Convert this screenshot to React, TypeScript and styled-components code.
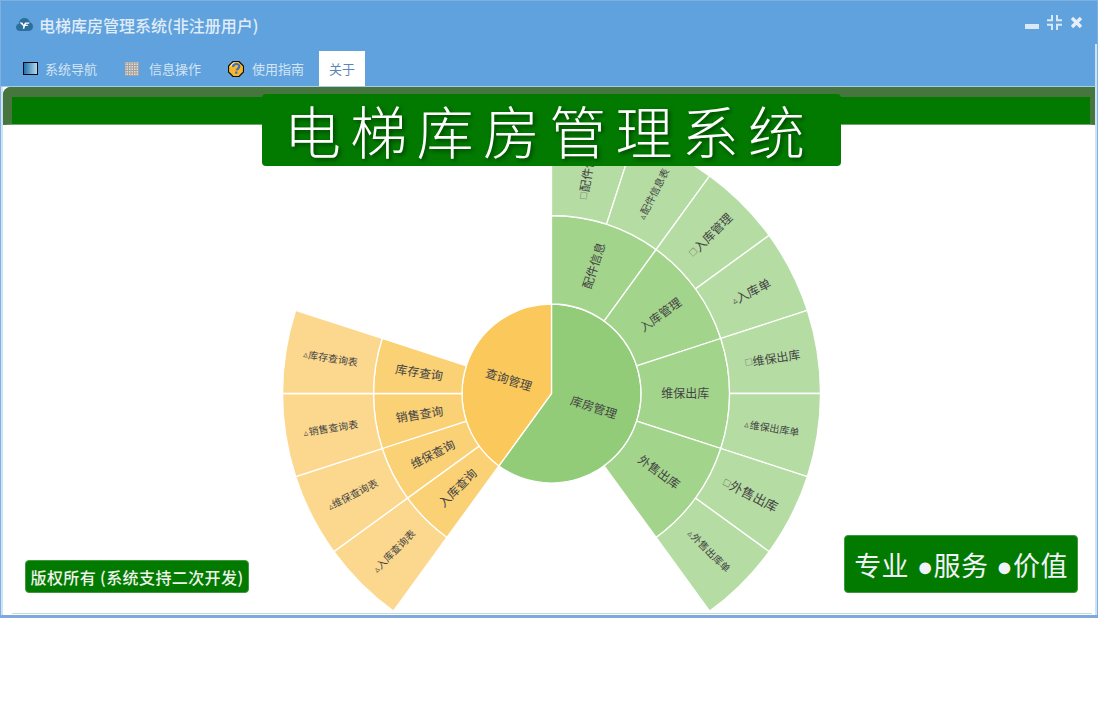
import React from "react";
import styled, { createGlobalStyle } from "styled-components";

const CJK = `"Noto Sans CJK SC", "Liberation Sans", sans-serif`;

const Global = createGlobalStyle`
  html, body { margin: 0; padding: 0; background: #fff; }
  body { font-family: ${CJK}; width: 1098px; height: 728px; overflow: hidden; }
`;

const Win = styled.div`
  width: 1098px;
  height: 618px;
  box-sizing: border-box;
  background: #5fa2dd;
  border: 1px solid #7fb0e0;
  border-bottom: 3px solid #7fa8dc;
  display: flex;
  flex-direction: column;
`;
const TitleBar = styled.div`
  height: 43px;
  flex: none;
  display: flex;
  align-items: center;
  padding: 4px 14px 0 15px;
  box-sizing: border-box;
`;
const Title = styled.div`
  margin-left: 6px;
  font-size: 16px;
  line-height: 20px;
  font-weight: 500;
  color: #e0ecf8;
  white-space: nowrap;
`;
const WinButtons = styled.div`
  margin-left: auto;
  display: flex;
  align-items: center;
  gap: 8px;
  margin-top: -4px;
`;
const TabRow = styled.div`
  height: 43px;
  flex: none;
  display: flex;
  align-items: flex-end;
  padding-left: 16px;
  border-bottom: 1px solid #a9cbe9;
  border-right: 2px solid #cfe3f5;
  box-sizing: border-box;
`;
const Tab = styled.div<{ $after: number; $gap: number }>`
  height: 35px;
  display: flex;
  align-items: center;
  gap: ${(p) => p.$gap}px;
  padding: 0 6px;
  margin-right: ${(p) => p.$after}px;
  font-size: 13px;
  color: #d4e4f4;
`;
const ActiveTab = styled.div`
  height: 35px;
  display: flex;
  align-items: center;
  padding: 0 10px;
  font-size: 13px;
  color: #5b86b8;
  background: #fff;
`;
const Content = styled.div`
  flex: 1;
  min-height: 0;
  background: #fff;
  position: relative;
  overflow: hidden;
  border-left: 2px solid #cfe3f5;
  border-right: 2px solid #cfe3f5;
  display: flex;
  flex-direction: column;
`;
const Band = styled.div`
  flex: none;
  height: 27px;
  background: #027a00;
  border-style: solid;
  border-color: #46763e;
  border-width: 10px 5px 1px 9px;
  border-bottom-color: #6fa86e;
  border-top-left-radius: 8px;
`;
const Chart = styled.svg`
  flex: none;
  display: block;
`;
const BottomRule = styled.div`
  flex: none;
  margin: auto 3px 1px 9px;
  height: 1px;
  background: #c5dcd0;
`;
const Banner = styled.div`
  position: absolute;
  left: 259px;
  top: 7px;
  width: 579px;
  height: 72px;
  box-sizing: border-box;
  background: #027a00;
  border-radius: 4px;
  color: #fff;
  font-size: 57px;
  font-weight: 300;
  letter-spacing: 9.3px;
  line-height: 70px;
  padding-left: 22px;
  white-space: nowrap;
  text-shadow: 2px 2px 4px rgba(0, 0, 0, 0.5);
`;
const Copyright = styled.div`
  position: absolute;
  left: 22px;
  top: 473px;
  width: 224px;
  height: 33px;
  box-sizing: border-box;
  background: #027a00;
  border: 1px solid #3f9a3f;
  border-radius: 4px;
  color: #eef3ec;
  font-size: 16px;
  font-weight: 500;
  letter-spacing: 0.4px;
  line-height: 33px;
  text-align: center;
  white-space: nowrap;
`;
const Slogan = styled.div`
  position: absolute;
  left: 841px;
  top: 448px;
  width: 234px;
  height: 58px;
  box-sizing: border-box;
  background: #027a00;
  border: 1px solid #3f9a3f;
  border-radius: 4px;
  color: #f1f3f8;
  font-family: "Liberation Sans", "Noto Sans CJK SC", sans-serif;
  font-size: 27px;
  letter-spacing: 0.4px;
  line-height: 62px;
  text-align: center;
  white-space: nowrap;
`;

const CX = 548.5;
const CY = 306.5;
const R = [0, 89.5, 178, 269];
const pt = (r: number, a: number) => {
  const t = (a * Math.PI) / 180;
  return [CX + r * Math.sin(t), CY - r * Math.cos(t)];
};
const arc = (r0: number, r1: number, a0: number, a1: number) => {
  const [x0, y0] = pt(r1, a0);
  const [x1, y1] = pt(r1, a1);
  const large = a1 - a0 > 180 ? 1 : 0;
  if (r0 === 0) return `M${CX} ${CY}L${x0} ${y0}A${r1} ${r1} 0 ${large} 1 ${x1} ${y1}Z`;
  const [x2, y2] = pt(r0, a1);
  const [x3, y3] = pt(r0, a0);
  return `M${x0} ${y0}A${r1} ${r1} 0 ${large} 1 ${x1} ${y1}L${x2} ${y2}A${r0} ${r0} 0 ${large} 0 ${x3} ${y3}Z`;
};

type Seg = { ring: number; a0: number; a1: number; fill: string; mark?: string; label: string; size: number };
const G = ["#93cc79", "#a3d48c", "#b5dca3"];
const O = ["#fbc85c", "#fbd176", "#fcd88e"];
const segs: Seg[] = [
  { ring: 0, a0: 0, a1: 216, fill: G[0], label: "库房管理", size: 12 },
  { ring: 0, a0: 216, a1: 360, fill: O[0], label: "查询管理", size: 12 },
  { ring: 1, a0: 0, a1: 36, fill: G[1], label: "配件信息", size: 12 },
  { ring: 1, a0: 36, a1: 72, fill: G[1], label: "入库管理", size: 12 },
  { ring: 1, a0: 72, a1: 108, fill: G[1], label: "维保出库", size: 12 },
  { ring: 1, a0: 108, a1: 144, fill: G[1], label: "外售出库", size: 12 },
  { ring: 1, a0: 216, a1: 234, fill: O[1], label: "入库查询", size: 12 },
  { ring: 1, a0: 234, a1: 252, fill: O[1], label: "维保查询", size: 12 },
  { ring: 1, a0: 252, a1: 270, fill: O[1], label: "销售查询", size: 12 },
  { ring: 1, a0: 270, a1: 288, fill: O[1], label: "库存查询", size: 12 },
  { ring: 2, a0: 0, a1: 18, fill: G[2], mark: "□", label: "配件信息", size: 12 },
  { ring: 2, a0: 18, a1: 36, fill: G[2], mark: "▵", label: "配件信息表", size: 10 },
  { ring: 2, a0: 36, a1: 54, fill: G[2], mark: "□", label: "入库管理", size: 12 },
  { ring: 2, a0: 54, a1: 72, fill: G[2], mark: "▵", label: "入库单", size: 12.5 },
  { ring: 2, a0: 72, a1: 90, fill: G[2], mark: "□", label: "维保出库", size: 12 },
  { ring: 2, a0: 90, a1: 108, fill: G[2], mark: "▵", label: "维保出库单", size: 10 },
  { ring: 2, a0: 108, a1: 126, fill: G[2], mark: "□", label: "外售出库", size: 13 },
  { ring: 2, a0: 126, a1: 144, fill: G[2], mark: "▵", label: "外售出库单", size: 10 },
  { ring: 2, a0: 216, a1: 234, fill: O[2], mark: "▵", label: "入库查询表", size: 10 },
  { ring: 2, a0: 234, a1: 252, fill: O[2], mark: "▵", label: "维保查询表", size: 10 },
  { ring: 2, a0: 252, a1: 270, fill: O[2], mark: "▵", label: "销售查询表", size: 10 },
  { ring: 2, a0: 270, a1: 288, fill: O[2], mark: "▵", label: "库存查询表", size: 10 },
];

const SegLabel = styled.text`
  font-family: ${CJK};
  fill: #444;
  text-anchor: middle;
  dominant-baseline: central;
`;
const Mark = styled.tspan<{ $square: boolean }>`
  fill: #4a4a4a;
  font-size: ${(p) => (p.$square ? 8 : 9)}px;
`;

const Sunburst = () => (
  <Chart width={1092} height={486} viewBox="0 38 1092 486">
    {segs.map((s) => (
      <path
        key={s.label + s.ring}
        d={arc(R[s.ring], R[s.ring + 1], s.a0, s.a1)}
        fill={s.fill}
        stroke="#fff"
        strokeWidth={1.3}
      />
    ))}
    {segs.map((s) => {
      const mid = (s.a0 + s.a1) / 2;
      const r = s.ring === 0 ? 44.75 : (R[s.ring] + R[s.ring + 1]) / 2;
      const [x, y0] = pt(r, mid);
      const y = y0 - 1;
      const rot = mid < 180 ? mid - 90 : mid - 270;
      return (
        <SegLabel key={"t" + s.label + s.ring} x={x} y={y} fontSize={s.size} transform={`rotate(${rot} ${x} ${y})`}>
          {s.mark && <Mark $square={s.mark === "□"}>{s.mark}</Mark>}
          {s.label}
        </SegLabel>
      );
    })}
  </Chart>
);

const LogoIcon = () => (
  <svg width="17" height="15" viewBox="0 0 17 15">
    <path d="M4 14C1.500 14 0 12.200 0 10.200 0 8.200 1.300 7 2.800 6.700 3 3 5.800 1 8.500 1c2.800 0 4.800 1.800 5.400 4.200C15.700 5.600 17 7.400 17 9.600 17 12.300 15.200 14 12.800 14z" fill="#2b6f9f" />
    <path d="M3.500 5.500h2.800l1.300 2.300 1.500-2.300h4.400l-.5 1.300h-2.700l-.6 1h2.400l-.5 1.200h-2.500l-.8 2.700H6.900l.4-2.500z" fill="#fff" />
  </svg>
);
const NavIcon = () => (
  <svg width="15" height="13" viewBox="0 0 15 13">
    <defs>
      <linearGradient id="nav" x1="0" x2="1" y1="0" y2="0">
        <stop offset="0" stopColor="#1d6fa8" />
        <stop offset="1" stopColor="#bcdcf0" />
      </linearGradient>
    </defs>
    <rect x="0.500" y="0.500" width="14" height="12" fill="url(#nav)" stroke="#050a18" />
  </svg>
);
const GridIcon = () => (
  <svg width="14" height="14" viewBox="0 0 14 14">
    <rect width="14" height="14" fill="#dfdddb" />
    {[0.5, 3, 5.5, 8, 10.5, 13].map((v) => (
      <React.Fragment key={v}>
        <rect x={v} y="0" width="1" height="14" fill="#a3a09e" />
        <rect x="0" y={v} width="14" height="1" fill="#a3a09e" />
      </React.Fragment>
    ))}
  </svg>
);
const HelpIcon = () => (
  <svg width="16" height="16" viewBox="0 0 16 16">
    <path d="M5 .5h6L15.500 5v6L11 15.500H5L.5 11V5z" fill="#f6b62e" stroke="#14100a" strokeWidth="1.200" />
    <path d="M2.500 5.500C3.500 3 5 2 7 2" fill="none" stroke="#fff2c0" strokeWidth="1.200" />
    <path d="M5 6C5.200 4 6.700 3 8.300 3c1.800 0 3 1.100 3 2.500 0 2-2.400 2-2.500 3.900" fill="none" stroke="#3d6fc4" strokeWidth="2.200" />
    <rect x="7.200" y="10.500" width="2.200" height="2.200" fill="#3d6fc4" />
  </svg>
);
const MinIcon = () => (
  <svg width="14" height="15" viewBox="0 0 14 15">
    <rect x="0" y="9" width="14" height="5" fill="#dbe9f7" />
  </svg>
);
const RestoreIcon = () => (
  <svg width="15" height="15" viewBox="0 0 15 15" fill="#dbe9f7">
    <path d="M4 0h2v6.300H0v-2h4zM9 0h2v4.300h4v2H9zM0 8.700h6V15H4v-4.300H0zM9 8.700h6v2h-4V15H9z" />
  </svg>
);
const CloseIcon = () => (
  <svg width="13" height="13" viewBox="0 0 13 13">
    <path d="M2 2l9 9M11 2l-9 9" stroke="#e4eefa" strokeWidth="3.400" />
  </svg>
);

export default function App() {
  return (
    <>
      <Global />
      <Win>
        <TitleBar>
          <LogoIcon />
          <Title>电梯库房管理系统(非注册用户)</Title>
          <WinButtons>
            <MinIcon />
            <RestoreIcon />
            <CloseIcon />
          </WinButtons>
        </TitleBar>
        <TabRow>
          <Tab $after={16} $gap={7}><NavIcon />系统导航</Tab>
          <Tab $after={15} $gap={10}><GridIcon />信息操作</Tab>
          <Tab $after={9} $gap={8}><HelpIcon />使用指南</Tab>
          <ActiveTab>关于</ActiveTab>
        </TabRow>
        <Content>
          <Band />
          <Sunburst />
          <BottomRule />
          <Banner>电梯库房管理系统</Banner>
          <Copyright>版权所有 (系统支持二次开发)</Copyright>
          <Slogan>专业 ●服务 ●价值</Slogan>
        </Content>
      </Win>
    </>
  );
}
